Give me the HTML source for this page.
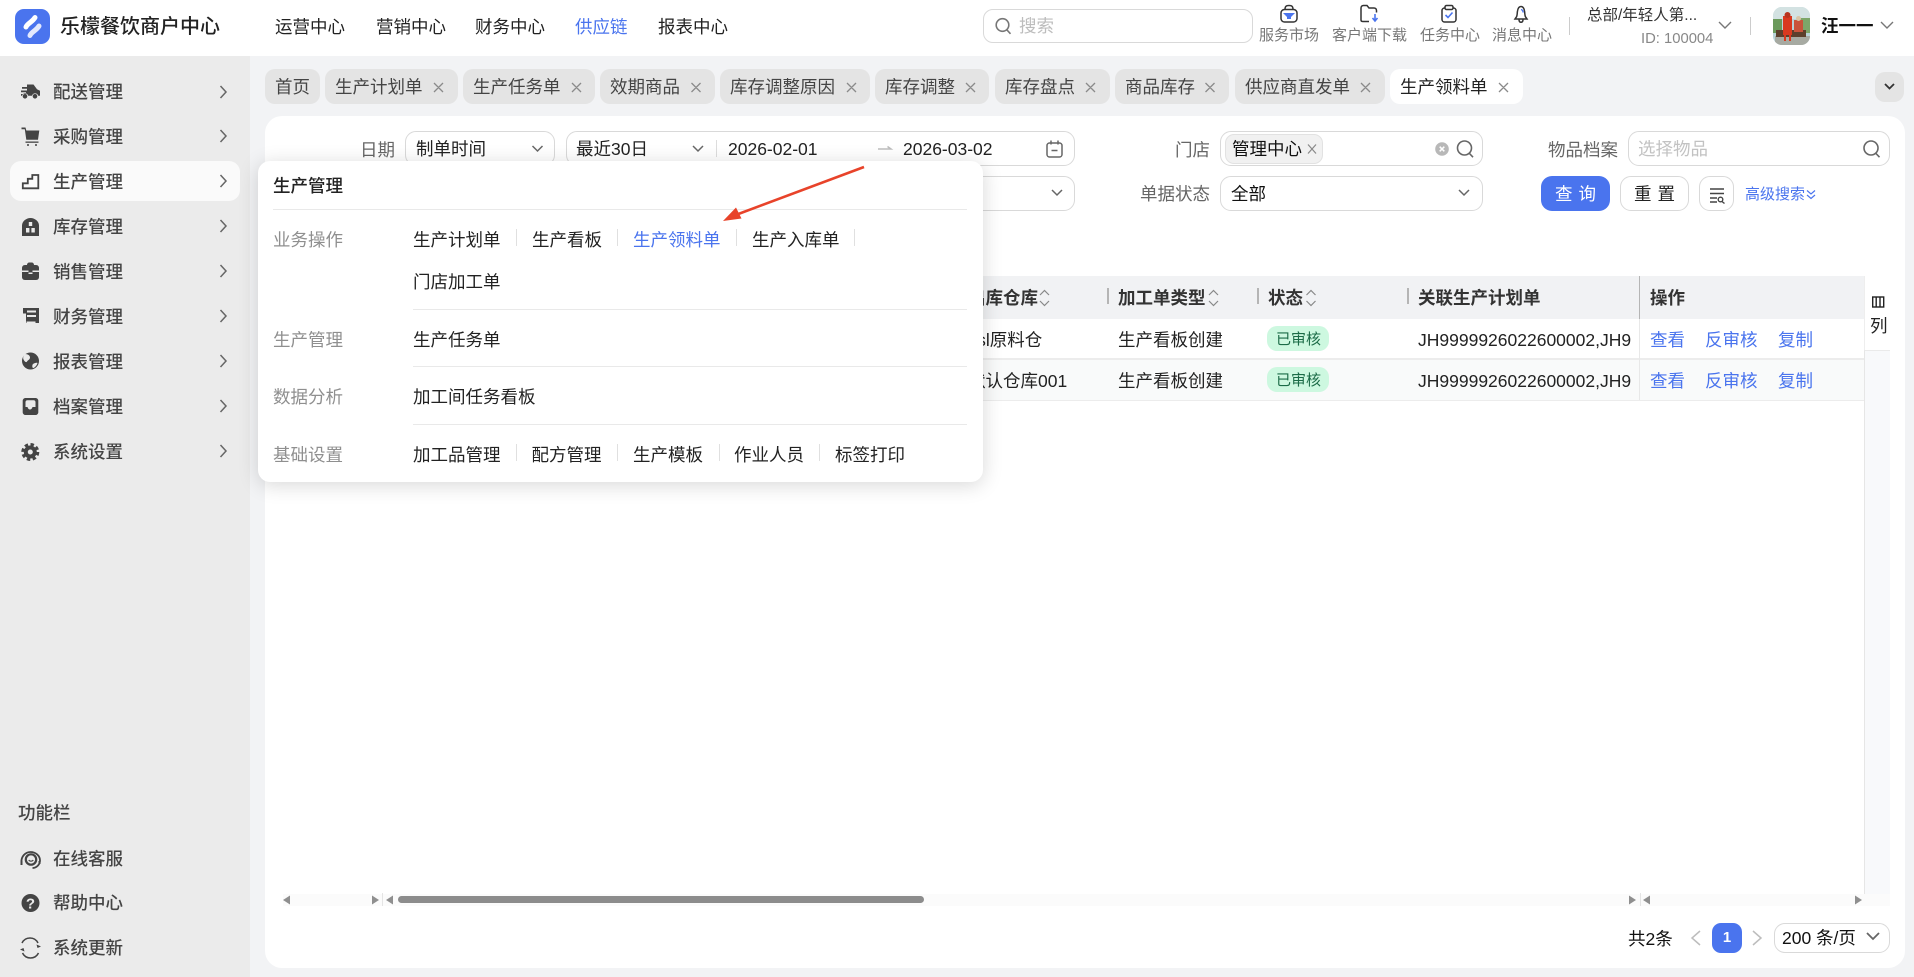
<!DOCTYPE html>
<html lang="zh-CN"><head><meta charset="utf-8"><title>乐檬餐饮商户中心</title>
<style>
html,body{margin:0;padding:0;width:1914px;height:977px;overflow:hidden;background:#f2f3f5;font-family:"Liberation Sans","Noto Sans CJK SC",sans-serif;}
div,span{box-sizing:border-box}
.b{position:absolute}
.t{position:absolute;white-space:nowrap;line-height:24px;height:24px;font-size:17.5px;color:#333}
.s{color:#444;font-weight:500}
.g{color:#8f8f8f}
.k{color:#222}
.l{color:#666}
.h{font-weight:700;color:#333}
.blue{color:#4a74ee}
.sm{font-size:15px;color:#777}
.tab{position:absolute;top:69px;height:35px;border-radius:10px;background:#e4e4e4}
.tab2{color:#444;font-weight:400}
.box{position:absolute;background:#fff;border:1px solid #d9d9d9;border-radius:11px}
.sep{position:absolute;width:1px;height:17px;background:#e0e0e0}
.ln{position:absolute;height:1px;background:#e9e9e9}
#pop{position:absolute;left:258px;top:161px;width:725px;height:321px;background:#fff;border-radius:12px;box-shadow:0 3px 20px rgba(0,0,0,.16);z-index:5}
#ov{position:absolute;left:0;top:0;z-index:8;pointer-events:none}
</style></head><body>
<!-- backgrounds -->
<div class="b" style="left:0;top:0;width:1914px;height:56px;background:#fff"></div>
<div class="b" style="left:0;top:56px;width:250px;height:921px;background:#ebebeb"></div>
<div class="b" style="left:10px;top:161px;width:230px;height:40px;background:#fafafa;border-radius:11px"></div>
<div class="b" style="left:265px;top:116px;width:1640px;height:852px;background:#fff;border-radius:17px"></div>

<!-- header -->
<span class="t k" style="left:60px;top:15px;font-size:20px;font-weight:500;color:#222">乐檬餐饮商户中心</span>
<span class="t k" style="left:275px;top:15px">运营中心</span>
<span class="t k" style="left:376px;top:15px">营销中心</span>
<span class="t k" style="left:475px;top:15px">财务中心</span>
<span class="t blue" style="left:575px;top:15px">供应链</span>
<span class="t k" style="left:658px;top:15px">报表中心</span>
<div class="box" style="left:983px;top:9px;width:270px;height:34px;border-radius:10px"></div>
<span class="t" style="left:1019px;top:14px;color:#bdbdbd">搜索</span>
<span class="t sm" style="left:1259px;top:24px">服务市场</span>
<span class="t sm" style="left:1332px;top:24px">客户端下载</span>
<span class="t sm" style="left:1420px;top:24px">任务中心</span>
<span class="t sm" style="left:1492px;top:24px">消息中心</span>
<div class="b" style="left:1569px;top:17px;width:1px;height:18px;background:#ccc"></div>
<span class="t" style="left:1587px;top:4px;font-size:15.500px">总部/年轻人第...</span>
<span class="t sm" style="left:1641px;top:27px;color:#888;font-size:14.800px">ID: 100004</span>
<div class="b" style="left:1750px;top:17px;width:1px;height:18px;background:#ccc"></div>
<span class="t" style="left:1821px;top:14px;font-weight:700;color:#111">汪一一</span>

<!-- sidebar -->
<span class="t s" style="left:53px;top:80px">配送管理</span>
<span class="t s" style="left:53px;top:125px">采购管理</span>
<span class="t s" style="left:53px;top:170px">生产管理</span>
<span class="t s" style="left:53px;top:215px">库存管理</span>
<span class="t s" style="left:53px;top:260px">销售管理</span>
<span class="t s" style="left:53px;top:305px">财务管理</span>
<span class="t s" style="left:53px;top:350px">报表管理</span>
<span class="t s" style="left:53px;top:395px">档案管理</span>
<span class="t s" style="left:53px;top:440px">系统设置</span>
<span class="t s" style="left:18px;top:801px">功能栏</span>
<span class="t s" style="left:53px;top:847px">在线客服</span>
<span class="t s" style="left:53px;top:891px">帮助中心</span>
<span class="t s" style="left:53px;top:936px">系统更新</span>

<!-- tabs -->
<div class="tab" style="left:265px;width:55px"></div>
<div class="tab" style="left:325px;width:133px"></div>
<div class="tab" style="left:463px;width:132px"></div>
<div class="tab" style="left:600px;width:115px"></div>
<div class="tab" style="left:720px;width:150px"></div>
<div class="tab" style="left:875px;width:114px"></div>
<div class="tab" style="left:995px;width:115px"></div>
<div class="tab" style="left:1115px;width:114px"></div>
<div class="tab" style="left:1235px;width:150px"></div>
<div class="tab" style="left:1390px;width:133px;background:#fff"></div>
<div class="tab" style="left:1875px;top:72px;width:29px;height:30px"></div>
<span class="t tab2" style="left:275px;top:75px">首页</span>
<span class="t tab2" style="left:335px;top:75px">生产计划单</span>
<span class="t tab2" style="left:473px;top:75px">生产任务单</span>
<span class="t tab2" style="left:610px;top:75px">效期商品</span>
<span class="t tab2" style="left:730px;top:75px">库存调整原因</span>
<span class="t tab2" style="left:885px;top:75px">库存调整</span>
<span class="t tab2" style="left:1005px;top:75px">库存盘点</span>
<span class="t tab2" style="left:1125px;top:75px">商品库存</span>
<span class="t tab2" style="left:1245px;top:75px">供应商直发单</span>
<span class="t k" style="left:1400px;top:75px">生产领料单</span>

<!-- filters -->
<span class="t l" style="left:360px;top:138px">日期</span>
<div class="box" style="left:405px;top:131px;width:150px;height:35px"></div>
<span class="t k" style="left:416px;top:137px">制单时间</span>
<div class="box" style="left:566px;top:131px;width:509px;height:35px"></div>
<span class="t k" style="left:576px;top:137px">最近30日</span>
<div class="b" style="left:716px;top:140px;width:1px;height:17px;background:#ddd"></div>
<span class="t k" style="left:728px;top:137px">2026-02-01</span>
<span class="t k" style="left:903px;top:137px">2026-03-02</span>
<span class="t l" style="left:1175px;top:138px">门店</span>
<div class="box" style="left:1220px;top:131px;width:263px;height:35px"></div>
<div class="b" style="left:1225px;top:134px;width:98px;height:30px;background:#f1f1f1;border:1px solid #e2e2e2;border-radius:9px"></div>
<span class="t" style="left:1232px;top:137px;color:#111">管理中心</span>
<span class="t l" style="left:1548px;top:138px">物品档案</span>
<div class="box" style="left:1628px;top:131px;width:262px;height:35px"></div>
<span class="t" style="left:1638px;top:137px;color:#c2c2c2">选择物品</span>
<div class="box" style="left:566px;top:176px;width:509px;height:35px"></div>
<span class="t l" style="left:1140px;top:182px">单据状态</span>
<div class="box" style="left:1220px;top:176px;width:263px;height:35px"></div>
<span class="t" style="left:1231px;top:182px;color:#111">全部</span>
<div class="b" style="left:1541px;top:176px;width:69px;height:35px;background:#4a74ee;border-radius:11px"></div>
<span class="t" style="left:1555px;top:182px;color:#fff;letter-spacing:6px">查询</span>
<div class="box" style="left:1620px;top:176px;width:69px;height:35px"></div>
<span class="t" style="left:1634px;top:182px;color:#222;letter-spacing:6px">重置</span>
<div class="box" style="left:1699px;top:176px;width:35px;height:35px"></div>
<span class="t blue" style="left:1745px;top:183px;font-size:15px">高级搜索</span>

<!-- table -->
<div class="b" style="left:265px;top:276px;width:1599px;height:43px;background:#f1f2f4"></div>
<div class="b" style="left:265px;top:360px;width:1599px;height:40px;background:#f9fafa"></div>
<div class="b" style="left:265px;top:358px;width:1599px;height:2px;background:#ececec"></div>
<div class="b" style="left:265px;top:400px;width:1599px;height:1px;background:#ececec"></div>
<div class="b" style="left:1864px;top:276px;width:26px;height:630px;background:#fff;border-left:1px solid #eee"></div>
<div class="b" style="left:1864px;top:350px;width:26px;height:556px;background:#f8f9fb;border-left:1px solid #e6e6e6;border-top:1px solid #eaeaea"></div>
<div class="b" style="left:1639px;top:276px;width:1px;height:43px;background:#b5b5b5"></div>
<div class="b" style="left:1639px;top:319px;width:1px;height:81px;background:#e8e8e8"></div>
<div class="b" style="left:1107px;top:288px;width:2px;height:16px;background:#b5b5b5"></div>
<div class="b" style="left:1257px;top:288px;width:2px;height:16px;background:#b5b5b5"></div>
<div class="b" style="left:1407px;top:288px;width:2px;height:16px;background:#b5b5b5"></div>
<span class="t h" style="left:968px;top:286px">出库仓库</span>
<span class="t h" style="left:1118px;top:286px">加工单类型</span>
<span class="t h" style="left:1268px;top:286px">状态</span>
<span class="t h" style="left:1418px;top:286px">关联生产计划单</span>
<span class="t h" style="left:1650px;top:286px">操作</span>
<span class="t k" style="left:1870px;top:314px">列</span>
<span class="t k" style="left:962.500px;top:328px">rssl原料仓</span>
<span class="t k" style="left:1118px;top:328px">生产看板创建</span>
<div class="b" style="left:1267px;top:326px;width:62px;height:25px;background:#cdf8e0;border-radius:10px"></div>
<span class="t" style="left:1276px;top:328px;font-size:15px;color:#1b6b47">已审核</span>
<span class="t k" style="left:1418px;top:328px">JH9999926022600002,JH9</span>
<span class="t blue" style="left:1650px;top:328px">查看</span>
<span class="t blue" style="left:1705px;top:328px">反审核</span>
<span class="t blue" style="left:1778px;top:328px">复制</span>
<span class="t k" style="left:968px;top:369px">默认仓库001</span>
<span class="t k" style="left:1118px;top:369px">生产看板创建</span>
<div class="b" style="left:1267px;top:367px;width:62px;height:25px;background:#cdf8e0;border-radius:10px"></div>
<span class="t" style="left:1276px;top:369px;font-size:15px;color:#1b6b47">已审核</span>
<span class="t k" style="left:1418px;top:369px">JH9999926022600002,JH9</span>
<span class="t blue" style="left:1650px;top:369px">查看</span>
<span class="t blue" style="left:1705px;top:369px">反审核</span>
<span class="t blue" style="left:1778px;top:369px">复制</span>

<!-- scrollbar -->
<div class="b" style="left:283px;top:894px;width:1607px;height:12px;background:#fbfbfb"></div>
<div class="b" style="left:398px;top:896px;width:526px;height:7px;background:#8c8c8c;border-radius:4px"></div>
<div class="b" style="left:382px;top:893px;width:1px;height:13px;background:#e4e4e4"></div>
<div class="b" style="left:1640px;top:893px;width:1px;height:13px;background:#e4e4e4"></div>

<!-- pagination -->
<span class="t" style="left:1628px;top:927px;color:#111">共2条</span>
<div class="b" style="left:1712px;top:923px;width:30px;height:30px;background:#4a74ee;border-radius:9px"></div>
<span class="t" style="left:1712px;top:926px;width:30px;text-align:center;color:#fff;font-weight:700;font-size:15px">1</span>
<div class="box" style="left:1774px;top:923px;width:116px;height:30px"></div>
<span class="t" style="left:1782px;top:926px;color:#111">200 条/页</span>

<!-- popup -->
<div id="pop">
<span class="t" style="left:15px;top:13px;font-weight:500;color:#222">生产管理</span>
<div class="ln" style="left:15px;top:48px;width:694px"></div>
<span class="t g" style="left:15px;top:67px">业务操作</span>
<span class="t k" style="left:155px;top:67px">生产计划单</span><div class="sep" style="left:258px;top:68px"></div>
<span class="t k" style="left:274px;top:67px">生产看板</span><div class="sep" style="left:359px;top:68px"></div>
<span class="t blue" style="left:375px;top:67px">生产领料单</span><div class="sep" style="left:478px;top:68px"></div>
<span class="t k" style="left:494px;top:67px">生产入库单</span><div class="sep" style="left:596px;top:68px"></div>
<span class="t k" style="left:155px;top:109px">门店加工单</span>
<div class="ln" style="left:155px;top:148px;width:554px"></div>
<span class="t g" style="left:15px;top:167px">生产管理</span>
<span class="t k" style="left:155px;top:167px">生产任务单</span>
<div class="ln" style="left:155px;top:205px;width:554px"></div>
<span class="t g" style="left:15px;top:224px">数据分析</span>
<span class="t k" style="left:155px;top:224px">加工间任务看板</span>
<div class="ln" style="left:155px;top:263px;width:554px"></div>
<span class="t g" style="left:15px;top:282px">基础设置</span>
<span class="t k" style="left:155px;top:282px">加工品管理</span><div class="sep" style="left:258px;top:283px"></div>
<span class="t k" style="left:273.500px;top:282px">配方管理</span><div class="sep" style="left:359px;top:283px"></div>
<span class="t k" style="left:375px;top:282px">生产模板</span><div class="sep" style="left:461px;top:283px"></div>
<span class="t k" style="left:476px;top:282px">作业人员</span><div class="sep" style="left:561px;top:283px"></div>
<span class="t k" style="left:577px;top:282px">标签打印</span>
</div>

<svg id="ov" width="1914" height="977" viewBox="0 0 1914 977" fill="none">
<!-- logo -->
<rect x="15" y="9" width="35" height="35" rx="9" fill="#4a74ee"/>
<path d="M26 27c1-3.500 6.500-5 9-9.500" stroke="#fff" stroke-width="5" stroke-linecap="round"/>
<path d="M30 35.500c1-3.500 6.500-5 9-9.500" stroke="#e3e9fd" stroke-width="5" stroke-linecap="round"/>
<!-- search -->
<g stroke="#777" stroke-width="1.600"><circle cx="1002.500" cy="25" r="6.300"/><path d="M1007 30l3.500 3.800"/></g>
<!-- header icons -->
<g stroke="#333" stroke-width="1.500">
<rect x="1281" y="9.500" width="16" height="12.500" rx="3.500"/><path d="M1285 9.500c0-3 1-4 4-4s4 1 4 4"/>
<path d="M1361 20V8c0-1.500 1-2.500 2.500-2.500h3.500l2 2.500h5c1.500 0 2.500 1 2.500 2.500v2M1361 20c0 1 1 1.500 2 1.500h6"/>
<rect x="1442" y="8" width="14" height="14" rx="2.500"/><rect x="1445" y="5.500" width="8" height="4" rx="1.500" fill="#fff"/>
<path d="M1516 17.500c1.500-1.500 1-4 1.500-6.500.5-3 2-4.500 3.500-4.500s3 1.500 3.500 4.500c.5 2.500 0 5 1.500 6.500l1 1.500h-12zM1519 19.500c0 2 1 2.800 2 2.800s2-.8 2-2.800"/>
</g>
<path d="M1283 13h12l-4 4v2h-4v-2z" fill="#4a74ee"/>
<path d="M1375 14v6M1372.500 18l2.500 3 2.500-3" stroke="#4a74ee" stroke-width="1.600"/>
<path d="M1445.500 15l2.500 2.500 4.500-5" stroke="#4a74ee" stroke-width="1.600"/>
<path d="M1521 9.500c1.500.3 2 1.500 2.200 3" stroke="#4a74ee" stroke-width="1.400"/>
<!-- header chevrons -->
<g stroke="#777" stroke-width="1.400">
<path d="M1719 22l6 6 6-6"/><path d="M1881 22l6 6 6-6"/>
</g>
<!-- avatar -->
<defs><clipPath id="av"><rect x="1773" y="7" width="37" height="38" rx="9"/></clipPath></defs>
<g clip-path="url(#av)">
<rect x="1773" y="7" width="37" height="38" fill="#b9d3d8"/>
<rect x="1773" y="7" width="37" height="12" fill="#d3e2e2"/>
<rect x="1773" y="19" width="9" height="14" fill="#6b9a5c"/>
<rect x="1800" y="18" width="10" height="15" fill="#7da669"/>
<rect x="1775" y="36" width="35" height="9" fill="#a7aaa2"/>
<rect x="1776" y="30" width="30" height="7" fill="#5c3f2c"/>
<rect x="1783" y="16" width="9" height="19" fill="#d9391f"/>
<circle cx="1787.500" cy="15" r="3" fill="#b8341e"/>
<rect x="1794" y="20" width="9" height="12" fill="#c9533b"/>
<circle cx="1798.500" cy="18.500" r="2.500" fill="#d8c6a8"/>
<rect x="1784" y="35" width="2" height="6" fill="#d9391f"/><rect x="1789" y="35" width="2" height="6" fill="#d9391f"/>
</g>
<!-- sidebar icons -->
<g fill="#444">
<path d="M27 84.500h6.500l3.500 4.800 3 1.500v5h-1.800a3.200 3.200 0 0 0-6.200 0h-3.800a3.200 3.200 0 0 0-6.200 0H21v-1.800h5v-1.700h-5v-1.800h6V88.800h-5V87h5z"/>
<circle cx="25" cy="96.300" r="2.300"/><circle cx="35" cy="96.300" r="2.300"/>
<path d="M21.500 127.500h4l.8 3h13l-1.300 9.300H26.300l-1.500-10.500h-3.300z"/>
<rect x="25.500" y="141.500" width="13" height="1.300"/><circle cx="28" cy="145" r="1"/><circle cx="36" cy="145" r="1"/>
<path d="M22 236v-10.500c0-4 4-7.500 8.500-7.500s8.500 3.500 8.500 7.500V236z"/>
<path d="M22 271v-3c0-1.500 1-3 3-3h2c0-1.500 1-2.500 2.500-2.500h2c1.500 0 2.500 1 2.500 2.500h2c2 0 3 1.500 3 3v9c0 1.500-1 3-3 3H25c-2 0-3-1.500-3-3z"/>
<path d="M23 308h16v15h-3.500v-1.500h-9V323H26v-9.500h-3z"/>
<circle cx="30.500" cy="361" r="8.500"/>
<path d="M25.500 398h10c1.500 0 2.800 1.200 2.800 2.800v11.400c0 1.500-1.300 2.800-2.800 2.800h-10c-1.500 0-2.800-1.300-2.800-2.800v-11.400c0-1.600 1.300-2.800 2.800-2.800z"/>
<circle cx="30.500" cy="903" r="9"/>
<circle cx="30.300" cy="452" r="6.500"/>
</g>
<circle cx="30.300" cy="452" r="7.500" stroke="#444" stroke-width="3" stroke-dasharray="3.400 2.490"/>
<circle cx="30.300" cy="452" r="2.500" fill="#ebebeb"/>
<g fill="#ebebeb">
<rect x="28.800" y="222" width="3.400" height="4"/><rect x="26" y="228" width="3.400" height="4.500"/><rect x="31.400" y="228" width="3.400" height="4.500"/>
<path d="M22 270.500h6.500v2h4v-2H39v1.500h-6.500v2h-4v-2H22z"/>
<path d="M27 310.500h9v2h-9zM27 315h9v2h-9z"/>
<path d="M25 354c3 0 5 1.500 5 3.500 0 2-2 2.500-3 4-.8 1.500-2.500 0-3.500-2-.8-2 0-4 1.500-5.500zM33 364c1.500-1 3.500-1.500 4.500-1-.5 2-2 4-4 5-1.500.3-1.500-3-.5-4z"/>
<path d="M25.500 402c0-1 .8-1.800 1.800-1.800h6.400c1 0 1.800.8 1.800 1.800v5h-3c-.5 2-1.800 2.500-2.500 2.500s-2-.5-2.500-2.500h-2z"/>
</g>
<path d="M22.800 188.300v-5h5v-4.500h4.500v-3.800h6v13.300z" stroke="#444" stroke-width="1.800" fill="none"/>
<g stroke="#666" stroke-width="1.500">
<path d="M220.500 86l5.500 6-5.500 6M220.500 130l5.500 6-5.500 6M220.500 175l5.500 6-5.500 6M220.500 220l5.500 6-5.500 6M220.500 265l5.500 6-5.500 6M220.500 310l5.500 6-5.500 6M220.500 355l5.500 6-5.500 6M220.500 400l5.500 6-5.500 6M220.500 445l5.500 6-5.500 6"/>
</g>
<g stroke="#444" stroke-width="1.800">
<path d="M21.500 862c-.5-5 3.500-10 9-10s9.500 4 9.500 8.500c0 4-3.500 7.500-7.500 7.500"/>
<circle cx="31" cy="859.500" r="5.200" stroke-width="2.200"/>
<path d="M28.800 860c.8 1.600 3.600 1.600 4.400 0" stroke-width="1.200"/>
<path d="M22 943c1.500-3 4.500-5 8-5 3.500 0 6.500 2 8 5M38.500 953c-1.500 3-4.500 5-8 5-3.500 0-6.500-2-8-5" stroke-width="1.500"/>
</g>
<path d="M21.500 860.500v4.500M39.500 861v3" stroke="#444" stroke-width="2"/>
<path d="M41 946.500l-3.500 1.500-1-3.500zM20 949.500l3.500-1.500 1 3.500z" fill="#444"/>
<text x="30.500" y="908.500" font-family="Liberation Sans" font-size="15" font-weight="700" fill="#ebebeb" text-anchor="middle">?</text>
<!-- tab X -->
<g stroke="#8a8a8a" stroke-width="1.300">
<path d="M434 83l9 9M443 83l-9 9M572 83l9 9M581 83l-9 9M691.500 83l9 9M700.500 83l-9 9M847 83l9 9M856 83l-9 9M966 83l9 9M975 83l-9 9M1086 83l9 9M1095 83l-9 9M1205.500 83l9 9M1214.500 83l-9 9M1361 83l9 9M1370 83l-9 9M1499 83l9 9M1508 83l-9 9"/>
</g>
<path d="M1885 84l4.500 4.500 4.500-4.500" stroke="#333" stroke-width="1.800"/>
<!-- filter chevrons -->
<g stroke="#666" stroke-width="1.500">
<path d="M532.500 146l5 5 5-5M693 146l5 5 5-5M1052 190l5 5 5-5M1459 190l5 5 5-5"/>
</g>
<path d="M878 149h13l-3.500-2.500" stroke="#bbb" stroke-width="1.500"/>
<g stroke="#666" stroke-width="1.500">
<rect x="1047" y="143" width="15" height="14" rx="2.500"/>
<path d="M1051 140.500v4M1058 140.500v4M1051.500 150.500h6"/>
</g>
<circle cx="1442" cy="149" r="6.800" fill="#b8b8b8"/>
<path d="M1439.700 146.700l4.600 4.600M1444.300 146.700l-4.600 4.600" stroke="#fff" stroke-width="1.500"/>
<path d="M1308 144.500l8 9M1316 144.500l-8 9" stroke="#888" stroke-width="1.200"/>
<g stroke="#666" stroke-width="1.600">
<circle cx="1464.500" cy="148" r="7"/><path d="M1469.500 153.500l3.500 3.700"/>
<circle cx="1871" cy="148" r="7"/><path d="M1876 153.500l3.500 3.700"/>
</g>
<!-- advanced icon -->
<g stroke="#444" stroke-width="1.400">
<path d="M1710 189h14M1710 193.500h14M1710 198h7M1710 202h7"/>
<circle cx="1720.500" cy="199.500" r="2.300"/><path d="M1722 201.500l2.500 2"/>
</g>
<path d="M1807 190.500l4 3.500 4-3.500M1807 195l4 3.500 4-3.500" stroke="#4a74ee" stroke-width="1.200"/>
<!-- sort icons -->
<g stroke="#888" stroke-width="1.200">
<path d="M1040 295l4.500-4.500 4.500 4.500M1040 301l4.500 4.500 4.500-4.500M1209 295l4.500-4.500 4.500 4.500M1209 301l4.500 4.500 4.500-4.500M1306.500 295l4.500-4.500 4.500 4.500M1306.500 301l4.500 4.500 4.500-4.500"/>
</g>
<!-- column icon -->
<rect x="1872.700" y="297" width="11" height="10" stroke="#222" stroke-width="1.400"/>
<path d="M1876.200 297v10M1880 297v10" stroke="#222" stroke-width="1.400"/>
<!-- scroll arrows -->
<g fill="#8f8f8f">
<path d="M283 900l7-4.500v9z"/><path d="M379 900l-7-4.500v9z"/><path d="M386 900l7-4.500v9z"/>
<path d="M1636 900l-7-4.500v9z"/><path d="M1643 900l7-4.500v9z"/><path d="M1862 900l-7-4.500v9z"/>
</g>
<!-- pagination arrows -->
<g stroke="#bdbdbd" stroke-width="1.500"><path d="M1700 931l-8 7 8 7M1753 931l8 7-8 7"/></g>
<path d="M1867 933l6 6 6-6" stroke="#666" stroke-width="1.800"/>
<!-- red arrow -->
<path d="M864 167L733 216" stroke="#e8432a" stroke-width="2.600"/>
<path d="M723 221l13-13.500 5.500 11z" fill="#e8432a"/>
</svg>
</body></html>
